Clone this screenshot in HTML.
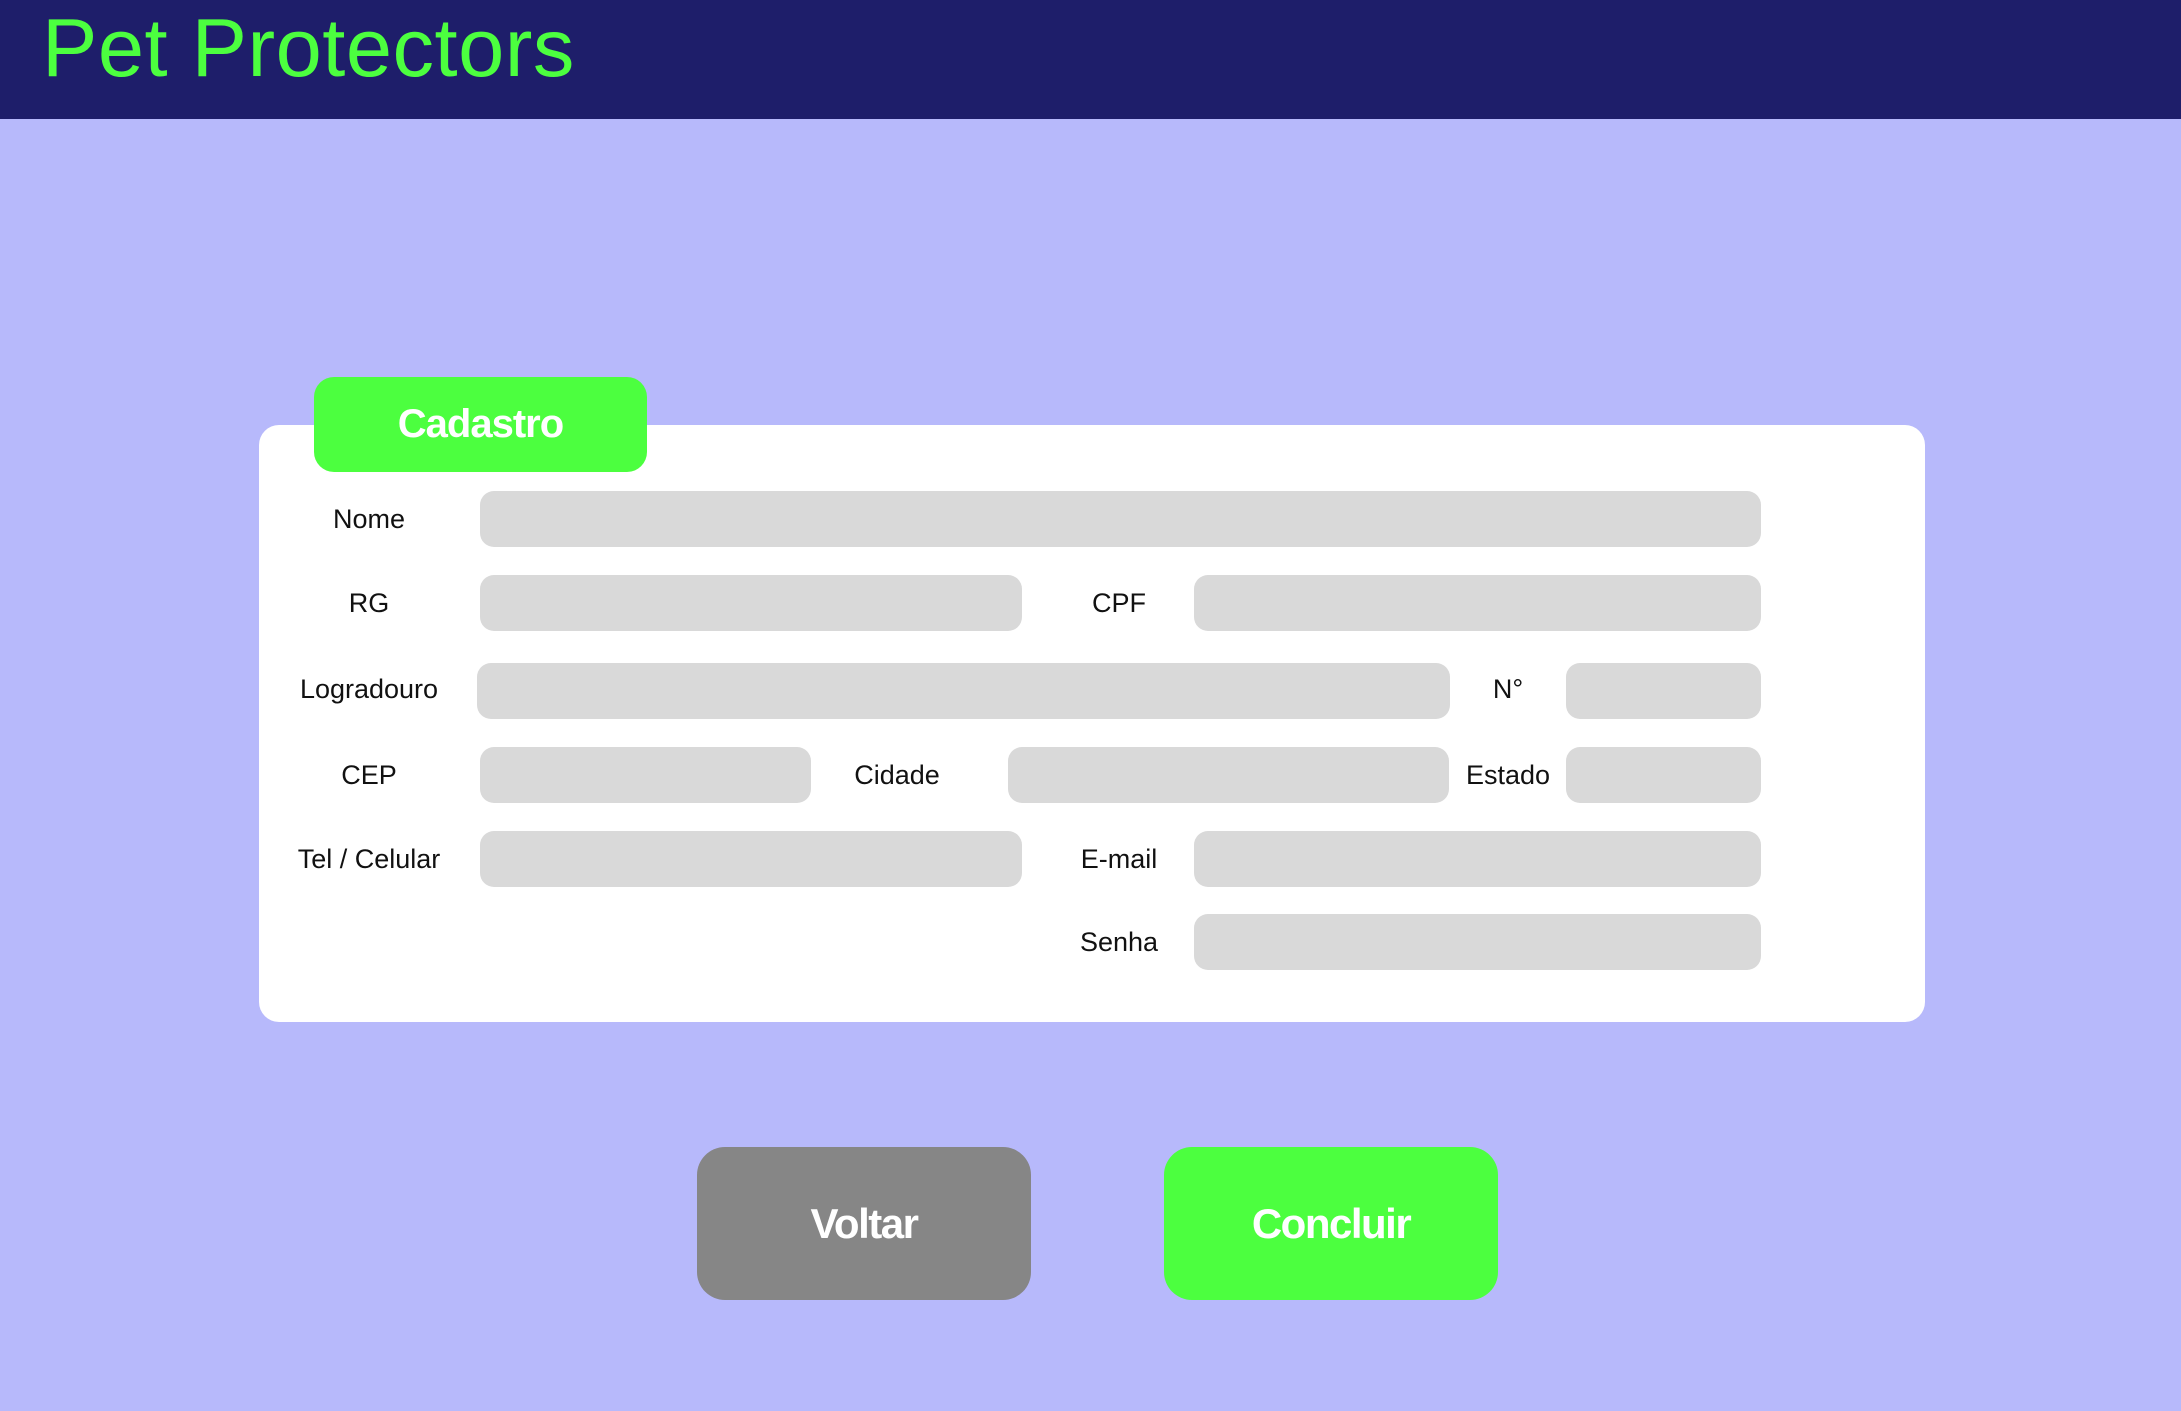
<!DOCTYPE html>
<html><head><meta charset="utf-8"><style>
*{margin:0;padding:0;box-sizing:border-box}
body{width:2181px;height:1411px;background:#b7b9fb;font-family:"Liberation Sans",Arial,sans-serif;position:relative;overflow:hidden}
.hdr{position:absolute;left:0;top:0;width:2181px;height:119px;background:#1e1e6a}
.title{position:absolute;left:42px;top:0px;font-size:83px;color:#4cff3f;line-height:96px;letter-spacing:0.5px}
.card{position:absolute;left:259px;top:425px;width:1666px;height:597px;background:#fff;border-radius:20px}
.tab{position:absolute;left:314px;top:377px;width:333px;height:95px;background:#4cff3f;border-radius:20px;color:#fff;font-weight:bold;font-size:40px;display:flex;align-items:center;justify-content:center;letter-spacing:-1px}
.f{position:absolute;background:#d9d9d9;border-radius:14px;height:56px}
.l{position:absolute;font-size:27px;color:#111;width:240px;text-align:center;transform:translateX(-120px);line-height:56px}
.btn{position:absolute;top:1147px;width:334px;height:153px;border-radius:28px;color:#fff;font-weight:bold;font-size:42px;display:flex;align-items:center;justify-content:center;letter-spacing:-1.5px}
</style></head><body>
<div class="hdr"></div><div class="title">Pet Protectors</div>
<div class="card"></div>
<div class="tab">Cadastro</div>

<div class="l" style="left:369px;top:491px">Nome</div>
<div class="f" style="left:480px;top:491px;width:1281px"></div>

<div class="l" style="left:369px;top:575px">RG</div>
<div class="f" style="left:480px;top:575px;width:542px"></div>
<div class="l" style="left:1119px;top:575px">CPF</div>
<div class="f" style="left:1194px;top:575px;width:567px"></div>

<div class="l" style="left:369px;top:661px">Logradouro</div>
<div class="f" style="left:477px;top:663px;width:973px"></div>
<div class="l" style="left:1508px;top:661px">N°</div>
<div class="f" style="left:1566px;top:663px;width:195px"></div>

<div class="l" style="left:369px;top:747px">CEP</div>
<div class="f" style="left:480px;top:747px;width:331px"></div>
<div class="l" style="left:897px;top:747px">Cidade</div>
<div class="f" style="left:1008px;top:747px;width:441px"></div>
<div class="l" style="left:1508px;top:747px">Estado</div>
<div class="f" style="left:1566px;top:747px;width:195px"></div>

<div class="l" style="left:369px;top:831px">Tel / Celular</div>
<div class="f" style="left:480px;top:831px;width:542px"></div>
<div class="l" style="left:1119px;top:831px">E-mail</div>
<div class="f" style="left:1194px;top:831px;width:567px"></div>

<div class="l" style="left:1119px;top:914px">Senha</div>
<div class="f" style="left:1194px;top:914px;width:567px"></div>

<div class="btn" style="left:697px;background:#868686">Voltar</div>
<div class="btn" style="left:1164px;background:#4cff3f">Concluir</div>
</body></html>
